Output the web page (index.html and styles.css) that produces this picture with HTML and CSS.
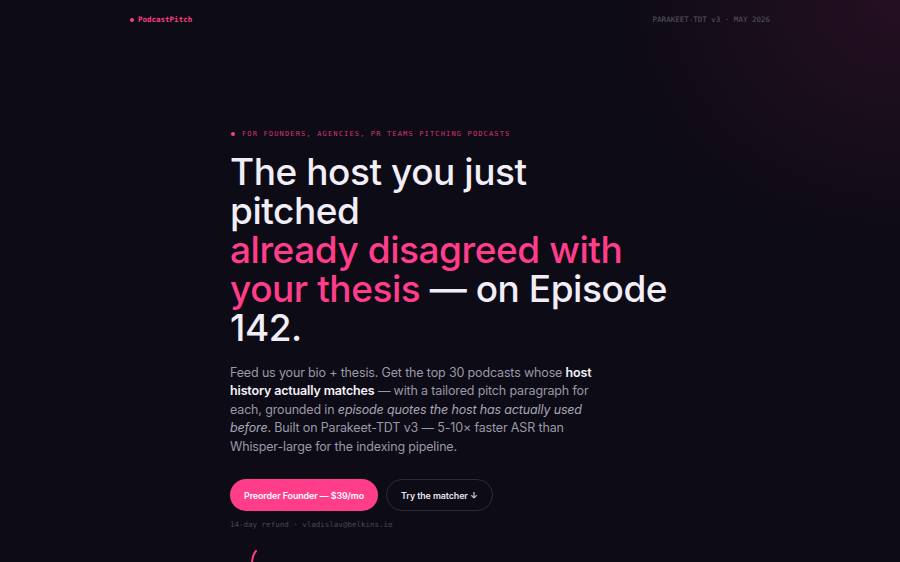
FILE: index.html
```html
<!DOCTYPE html>
<html lang="en">
<head>
<meta charset="utf-8">
<title>PodcastPitch</title>
<link rel="stylesheet" href="styles.css">
</head>
<body>
<div class="page">
  <header class="topbar">
    <div class="brand"><span class="dot"></span>PodcastPitch</div>
    <div class="meta">PARAKEET-TDT v3 · MAY 2026</div>
  </header>
  <main class="hero">
    <div class="eyebrow"><span class="dot small"></span>FOR FOUNDERS, AGENCIES, PR TEAMS PITCHING PODCASTS</div>
    <h1 class="title">The host you just<br>pitched<br><span class="accent">already disagreed with your thesis</span> — on Episode 142.</h1>
    <p class="lede">Feed us your bio + thesis. Get the top 30 podcasts whose <strong>host history actually matches</strong> — with a tailored pitch paragraph for each, grounded in <em>episode quotes the host has actually used before</em>. Built on Parakeet-TDT v3 — 5-10× faster ASR than Whisper-large for the indexing pipeline.</p>
    <div class="actions">
      <a class="btn primary" href="#">Preorder Founder — $39/mo</a>
      <a class="btn ghost" href="#">Try the matcher ↓</a>
    </div>
    <div class="fineprint">14-day refund · vladislav@belkins.io</div>
    <div class="next">
      <svg width="40" height="20" viewBox="0 0 40 20"><path d="M22 6 C19 9 18 13 18 20" fill="none" stroke="#ff3d8b" stroke-width="2" stroke-linecap="round"/></svg>
    </div>
  </main>
</div>
</body>
</html>
```

FILE: styles.css
```css
* { box-sizing: border-box; }
html, body { margin: 0; padding: 0; }
body {
  background: #0d0b15;
  background-image: radial-gradient(ellipse 420px 360px at 100% 0%, rgba(120, 30, 80, 0.22), rgba(13, 11, 21, 0) 70%);
  color: #ece9f3;
  font-family: Inter, "Noto Sans", sans-serif;
  height: 562px;
  overflow: hidden;
}
.page {
  width: 640px;
  margin: 0 auto;
}
.topbar {
  display: flex;
  justify-content: space-between;
  align-items: center;
  height: 38px;
  padding-top: 1px;
}
.brand {
  display: flex;
  align-items: center;
  gap: 4px;
  font-family: "DejaVu Sans Mono", "Liberation Mono", monospace;
  font-size: 7.5px;
  font-weight: bold;
  color: #ff3d8b;
}
.dot {
  width: 4px;
  height: 4px;
  border-radius: 50%;
  background: #ff3d8b;
  display: inline-block;
}
.meta {
  font-family: "DejaVu Sans Mono", "Liberation Mono", monospace;
  font-size: 7.5px;
  color: #5a5666;
}
.hero {
  padding: 92px 0 0 100px;
  width: 560px;
}
.eyebrow {
  display: flex;
  align-items: center;
  gap: 7px;
  font-family: "DejaVu Sans Mono", "Liberation Mono", monospace;
  font-size: 7px;
  letter-spacing: 0.165em;
  color: #d8336f;
  padding-left: 1px;
}
.title {
  margin: 14px 0 0;
  font-family: Inter, "Noto Sans", sans-serif;
  font-weight: 500;
  font-size: 37px;
  line-height: 39px;
  letter-spacing: -0.012em;
  color: #f1eef8;
  width: 450px;
}
.accent { color: #ff3d8b; }
.lede {
  margin: 17px 0 0;
  width: 362px;
  font-size: 12.5px;
  line-height: 18.4px;
  letter-spacing: -0.012em;
  color: #9b98a8;
}
.lede strong { color: #f4f2fa; font-weight: 600; }
.lede em { font-style: italic; color: #a9a6b6; }
.actions {
  display: flex;
  gap: 8px;
  margin-top: 23px;
}
.btn {
  display: inline-flex;
  align-items: center;
  height: 32px;
  border-radius: 16px;
  padding: 0 14px;
  font-size: 8.9px;
  font-weight: 600;
  letter-spacing: -0.01em;
  text-decoration: none;
}
.btn.primary {
  background: #ff3d8b;
  color: #fff;
}
.btn.ghost {
  border: 1px solid #2c2a36;
  color: #e7e4ee;
}
.fineprint {
  margin-top: 9px;
  font-family: "DejaVu Sans Mono", "Liberation Mono", monospace;
  font-size: 7.5px;
  color: #4b4857;
}
.next { margin-top: 16px; padding-left: 4px; }
```
